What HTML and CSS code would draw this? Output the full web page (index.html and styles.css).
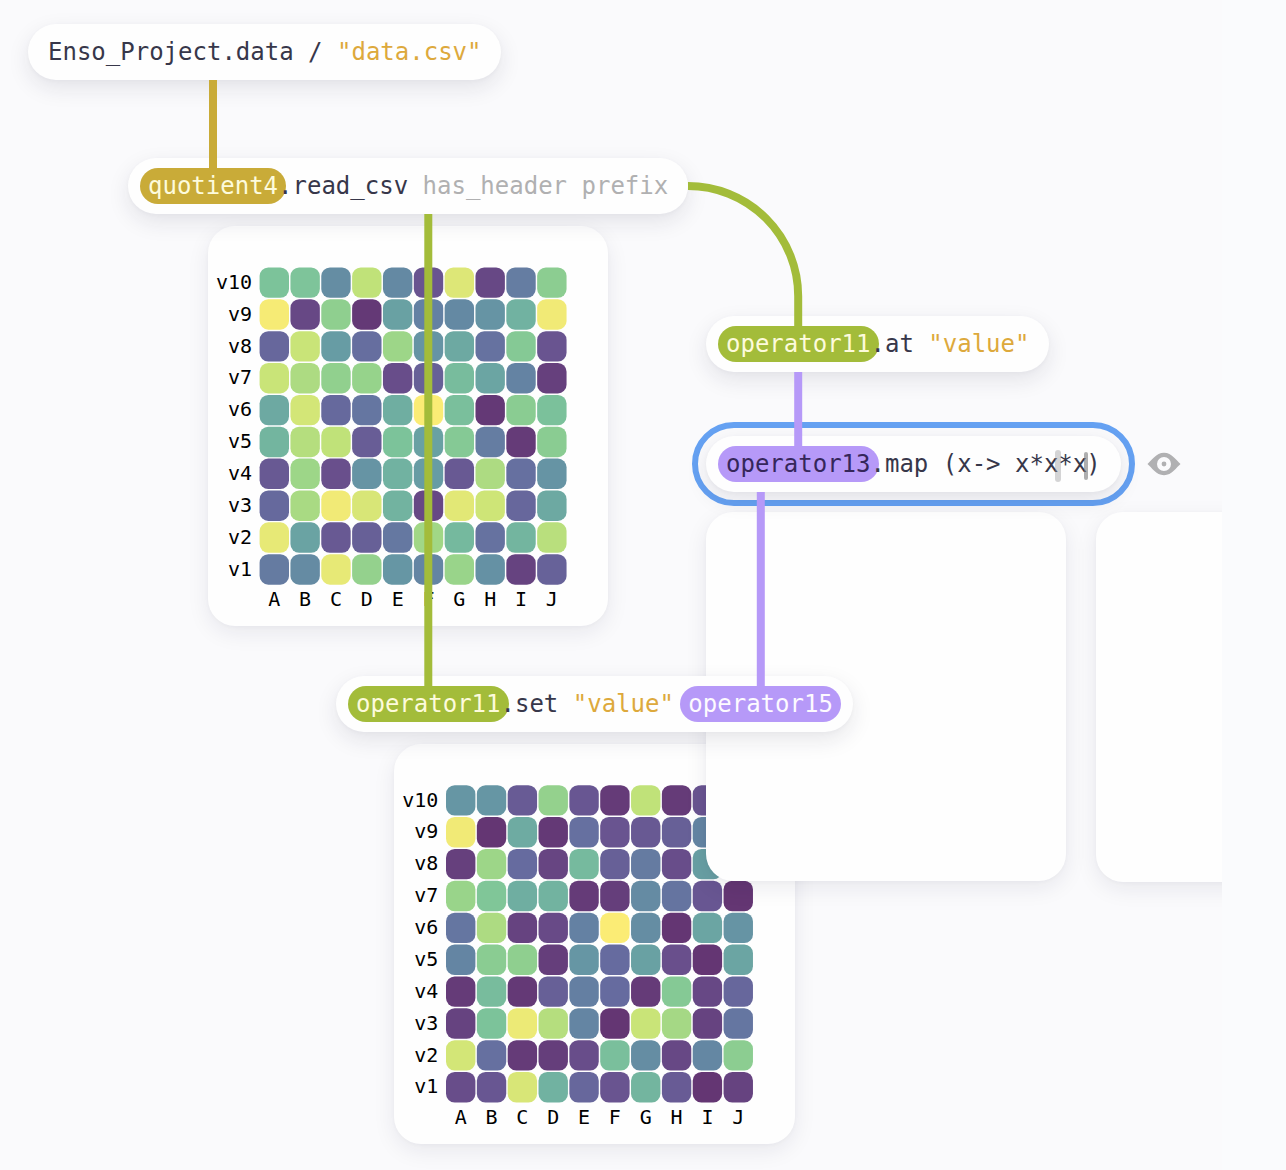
FILE: index.html
```html
<!DOCTYPE html>
<html lang="en">
<head>
<meta charset="utf-8">
<title>Enso graph</title>
<link rel="stylesheet" href="styles.css">
</head>
<body>
<main class="canvas">
  <section class="viz viz-read"><svg class="heatmap" data-set="read" viewBox="0 0 400 400"></svg></section>
  <section class="viz viz-set"><svg class="heatmap" data-set="set" viewBox="-0.400 0.200 400 400"></svg></section>
  <section class="viz viz-empty"></section>
  <div class="clip"><section class="viz viz-next"></section></div>

  <div class="selection"></div>
  <div class="node node-file"><span>Enso_Project.data / </span><span class="str">"data.csv"</span></div>
  <div class="node node-read"><span class="pill gold">quotient4</span><span>.read_csv </span><span class="hint">has_header prefix</span></div>
  <div class="node node-at"><span class="pill green">operator11</span><span>.at </span><span class="str">"value"</span></div>
  <div class="node node-map"><span class="pill violet dark">operator13</span><span>.map (x-&gt; x*x*<span class="tight">x</span>)</span><i class="caret wide"></i><i class="caret"></i></div>
  <div class="node node-set"><span class="pill green">operator11</span><span>.set </span><span class="str">"value" </span><span class="pill violet">operator15</span></div>

  <svg class="edges" viewBox="0 0 1286 1170">
    <path class="edge gold-line" d="M213 80V169"/>
    <path class="edge green-line" d="M428.300 214V687"/>
    <path class="edge green-line" d="M688 186A110.200 110.200 0 0 1 798.200 296.200V327"/>
    <path class="edge violet-line" d="M798.200 372V447"/>
    <path class="edge violet-line" d="M760.800 492V687"/>
  </svg>

  <svg class="eye" viewBox="0 0 34 24">
    <path fill-rule="evenodd" d="M0.500 12C4.500 8.800 9 .8 17 .8S29.500 8.800 33.500 12C29.500 15.200 25 23.200 17 23.200S4.500 15.200 .5 12ZM17 5A7 7 0 1 0 17 19A7 7 0 1 0 17 5Z"/>
    <circle cx="17" cy="12" r="2.400"/>
  </svg>
</main>
<script src="heatmap.js"></script>
</body>
</html>
```
FILE: styles.css
```css
body {
  margin: 0;
  background: #fafbfd;
}

.canvas {
  position: relative;
  width: 1286px;
  height: 1170px;
  overflow: hidden;
  background: linear-gradient(90deg, #fafafc 0 1222px, #fafbfd 1222px);
}

.viz {
  position: absolute;
  width: 400px;
  height: 400px;
  border-radius: 27px;
  background: #fefefe;
  box-shadow: 0 7px 22px rgba(30, 30, 60, 0.08), 0 1px 4px rgba(30, 30, 60, 0.03);
}

.viz-read { left: 208px; top: 226px; }
.viz-set { left: 394px; top: 744px; width: 401px; }
.viz-empty { left: 706px; top: 512px; width: 360px; height: 369px; }

.clip {
  position: absolute;
  left: 1067px;
  top: 500px;
  width: 155px;
  height: 430px;
  overflow: hidden;
}

.viz-next { left: 29px; top: 12px; height: 370px; }

.heatmap {
  display: block;
  width: 400px;
  height: 400px;
  font: 20px "DejaVu Sans Mono", monospace;
}

.node {
  position: absolute;
  box-sizing: border-box;
  height: 56px;
  padding: 0 20px;
  display: flex;
  align-items: center;
  border-radius: 28px;
  background: #fefefe;
  box-shadow: 0 8px 22px rgba(30, 30, 60, 0.1), 0 1px 4px rgba(30, 30, 60, 0.03);
  color: #37374a;
  font: 24px/36px "DejaVu Sans Mono", monospace;
  white-space: pre;
}

.node span { position: relative; }

.node-file { left: 28px; top: 24px; }
.node-read { left: 128px; top: 158px; }
.node-at { left: 706px; top: 316px; }
.node-map { left: 706px; top: 436px; }
.node-set { left: 336px; top: 676px; }

.str { color: #dda93c; }
.hint { color: #b0b0b1; }
.tight { letter-spacing: -1px; }

.pill {
  margin: 0 -8px;
  padding: 0 8px;
  border-radius: 18px;
  color: #fdfbdc;
}

.gold { background: #c9ab38; }
.green { background: #a3bc3a; }
.violet { background: #b699f8; color: #fdfaff; }
.dark { color: #35265a; }

.caret {
  position: absolute;
  left: 378px;
  top: 16px;
  width: 4px;
  height: 28px;
  border-radius: 2px;
  background: rgba(120, 120, 122, 0.6);
}

.caret.wide {
  left: 349px;
  top: 14px;
  width: 6px;
  height: 32px;
  border-radius: 3px;
  background: rgba(150, 150, 152, 0.4);
}

.selection {
  position: absolute;
  box-sizing: border-box;
  left: 692px;
  top: 422px;
  width: 443px;
  height: 84px;
  border: 6px solid #65a1f2;
  border-radius: 42px;
  background: #fafafc;
}

.edges {
  position: absolute;
  left: 0;
  top: 0;
  width: 1286px;
  height: 1170px;
  pointer-events: none;
}

.edge { fill: none; stroke-width: 8; }
.gold-line { stroke: #c9ab38; }
.green-line { stroke: #a3bc3a; }
.violet-line { stroke: #b699f8; }

.eye {
  position: absolute;
  left: 1146.500px;
  top: 452px;
  width: 34px;
  height: 24px;
  fill: #b0b0b2;
}
```
FILE: heatmap.js
```js
// Rows run from v10 down to v1, columns from A to J; values are percentages.
const sets = {
  read: [
    [66, 67, 38, 88, 36, 12, 94, 7, 30, 73],
    [99, 7, 74, 1, 48, 32, 36, 42, 56, 98],
    [20, 90, 46, 23, 79, 42, 52, 25, 70, 12],
    [90, 83, 75, 77, 9, 17, 62, 50, 33, 4],
    [52, 92, 21, 27, 54, 100, 64, 1, 72, 65],
    [58, 85, 88, 16, 66, 48, 70, 30, 2, 72],
    [14, 79, 10, 42, 56, 46, 14, 83, 24, 42],
    [21, 82, 98, 93, 57, 7, 95, 91, 20, 52],
    [96, 49, 14, 17, 28, 80, 60, 25, 58, 86],
    [29, 37, 96, 76, 43, 34, 78, 40, 5, 18]
  ],
  set: [
    [43, 43, 15, 76, 13, 2, 88, 2, 12, 30],
    [98, 0, 53, 1, 24, 12, 14, 17, 34, 60],
    [4, 79, 22, 6, 61, 17, 29, 9, 47, 10],
    [78, 68, 54, 57, 2, 3, 37, 26, 13, 0],
    [27, 83, 5, 8, 32, 100, 38, 0, 50, 42],
    [34, 72, 74, 3, 43, 22, 48, 10, 0, 50],
    [2, 62, 1, 17, 31, 22, 2, 70, 7, 20],
    [5, 66, 97, 85, 34, 0, 90, 81, 5, 27],
    [92, 24, 2, 3, 9, 64, 38, 7, 35, 73],
    [9, 13, 93, 56, 20, 12, 58, 15, 0, 5]
  ]
};

const stops = [
  [100, 54, 115], [105, 82, 143], [102, 108, 159], [100, 132, 163], [102, 153, 164],
  [112, 177, 161], [125, 196, 154], [152, 212, 138], [196, 227, 120], [251, 236, 117]
];

function color(value) {
  const t = value / 100 * 9;
  const i = Math.min(8, Math.floor(t));
  return "rgb(" + stops[i].map((c, k) => Math.round(c + (stops[i + 1][k] - c) * (t - i))).join(",") + ")";
}

function add(svg, tag, attrs, text) {
  const el = document.createElementNS("http://www.w3.org/2000/svg", tag);
  for (const key in attrs) el.setAttribute(key, attrs[key]);
  if (text) el.textContent = text;
  svg.appendChild(el);
}

document.querySelectorAll(".heatmap").forEach(svg => {
  sets[svg.dataset.set].forEach((row, r) => {
    const y = 41.4 + r * 31.87;
    add(svg, "text", { x: 44, y: y + 21.4, "text-anchor": "end" }, "v" + (10 - r));
    row.forEach((value, c) => {
      add(svg, "rect", { x: 51.6 + c * 30.84, y, width: 29.4, height: 30.4, rx: 8.7, fill: color(value) });
    });
  });
  [..."ABCDEFGHIJ"].forEach((name, c) => {
    add(svg, "text", { x: 66.3 + c * 30.84, y: 380, "text-anchor": "middle" }, name);
  });
});
```
